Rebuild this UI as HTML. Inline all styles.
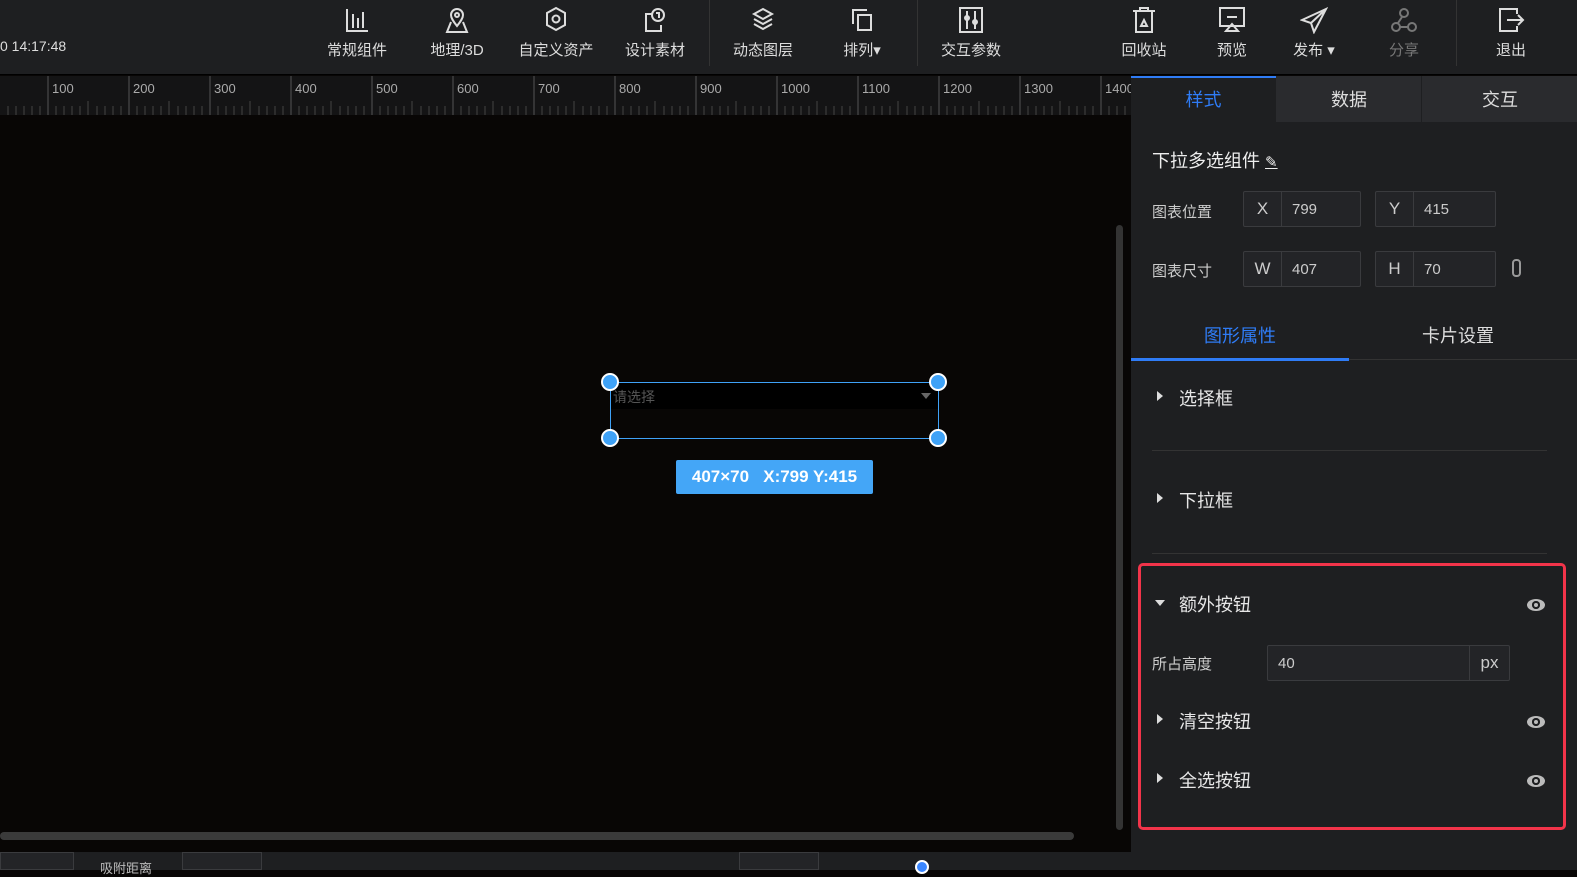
<!DOCTYPE html>
<html><head><meta charset="utf-8"><style>
*{box-sizing:border-box;margin:0;padding:0}
body{width:1577px;height:870px;overflow:hidden;background:#080605;font-family:"Liberation Sans","Noto Sans CJK SC",sans-serif;color:#ddd;position:relative}
.abs{position:absolute}
.top{left:0;top:0;width:1577px;height:75px;background:#1e1f21;border-bottom:1px solid #000}
.tb{position:absolute;top:0;height:75px;text-align:center;font-size:15px;color:#ddd}
.tb svg{display:block;margin:6px auto 0}
.tb span{display:block;margin-top:5px}
.sep{position:absolute;top:0;width:1px;height:66px;background:#333}
.ruler{left:0;top:76px;width:1131px;height:39px;background:#141415;overflow:hidden}
.panel{left:1131px;top:76px;width:446px;height:794px;background:#1e1f21}
.inp{position:absolute;height:36px;border:1px solid #3a3b3e;background:#232427;border-radius:2px;font-size:15px;color:#ccc}
.inp b{font-weight:normal;position:absolute;left:0;top:0;width:38px;height:34px;border-right:1px solid #3a3b3e;text-align:center;line-height:34px;font-size:17px}
.inp i{font-style:normal;position:absolute;left:48px;top:9px}
.lbl{position:absolute;font-size:15px;color:#ccc}
.sec{position:absolute;left:1179px;font-size:18px;color:#e6e6e6}
.tri{position:absolute;width:0;height:0;border-top:5px solid transparent;border-bottom:5px solid transparent;border-left:6px solid #ddd}
.eye{position:absolute;left:1527px;width:18px;height:12px;border-radius:50%;background:#bbb}
.eye:after{content:"";position:absolute;left:5px;top:2px;width:8px;height:8px;border-radius:50%;background:#1e1f21;box-shadow:inset 0 0 0 2px #1e1f21}
.eye:before{content:"";position:absolute;left:7px;top:4px;width:4px;height:4px;border-radius:50%;background:#bbb;z-index:2}
.h{position:absolute;width:18px;height:18px;border-radius:50%;background:#3fa2f7;border:2px solid #fff}
</style></head><body>
<div class="abs top"></div>
<div class="abs" style="left:0;top:38px;font-size:14px;color:#ddd">0 14:17:48</div>
<div class="tb" style="left:318px;width:78px"><svg width="26" height="28" viewBox="0 0 26 28" fill="none" stroke="#ddd" stroke-width="2"><path d="M3 3v22h21M9 8v14M14 12v10M19 6v16"/></svg><span>常规组件</span></div>
<div class="tb" style="left:418px;width:78px"><svg width="26" height="28" viewBox="0 0 26 28" fill="none" stroke="#ddd" stroke-width="2"><path d="M13 20c-4-5-6-8-6-11a6 6 0 0112 0c0 3-2 6-6 11zM7 16l-4 10h20l-4-10"/><circle cx="13" cy="9" r="2"/></svg><span>地理/3D</span></div>
<div class="tb" style="left:510px;width:92px"><svg width="26" height="28" viewBox="0 0 26 28" fill="none" stroke="#ddd" stroke-width="2"><path d="M13 2l9 5v12l-9 5-9-5V7z"/><circle cx="13" cy="13" r="3.5"/></svg><span>自定义资产</span></div>
<div class="tb" style="left:618px;width:74px"><svg width="26" height="28" viewBox="0 0 26 28" fill="none" stroke="#ddd" stroke-width="2"><path d="M10 8H4v17h15v-6"/><circle cx="16" cy="9" r="6"/><path d="M14 7h3v5"/></svg><span>设计素材</span></div>
<div class="sep" style="left:709px"></div>
<div class="tb" style="left:726px;width:74px"><svg width="26" height="28" viewBox="0 0 26 28" fill="none" stroke="#ddd" stroke-width="2"><path d="M13 3l9 5-9 5-9-5zM4 13l9 5 9-5M4 18l9 5 9-5"/></svg><span>动态图层</span></div>
<div class="tb" style="left:830px;width:64px"><svg width="26" height="28" viewBox="0 0 26 28" fill="none" stroke="#ddd" stroke-width="2"><path d="M4 18V4h14"/><rect x="9" y="9" width="13" height="15"/></svg><span>排列▾</span></div>
<div class="sep" style="left:917px"></div>
<div class="tb" style="left:934px;width:74px"><svg width="26" height="28" viewBox="0 0 26 28" fill="none" stroke="#ddd" stroke-width="2"><rect x="2" y="2" width="22" height="24"/><path d="M9 5v18M17 5v18"/><circle cx="9" cy="12" r="2"/><circle cx="17" cy="16" r="2"/></svg><span>交互参数</span></div>
<div class="tb" style="left:1114px;width:60px"><svg width="26" height="28" viewBox="0 0 26 28" fill="none" stroke="#ddd" stroke-width="2"><path d="M2 5h22M9 5V2h8v3M5 5v21h16V5M10 20h6l-3-6z"/></svg><span>回收站</span></div>
<div class="tb" style="left:1202px;width:60px"><svg width="28" height="28" viewBox="0 0 28 28" fill="none" stroke="#ddd" stroke-width="2"><path d="M2 2h24v18H2zM9 11h10M14 18l-6 7h12z"/></svg><span>预览</span></div>
<div class="tb" style="left:1282px;width:64px"><svg width="28" height="28" viewBox="0 0 28 28" fill="none" stroke="#ddd" stroke-width="2"><path d="M26 3L2 14l9 3 3 9zM11 17l15-14"/></svg><span>发布 ▾</span></div>
<div class="tb" style="left:1374px;width:60px;color:#777"><svg width="28" height="28" viewBox="0 0 28 28" fill="none" stroke="#777" stroke-width="2"><circle cx="14" cy="7" r="4"/><circle cx="6" cy="21" r="4"/><circle cx="22" cy="21" r="4"/><path d="M10 21h8M12 11l-4 6"/></svg><span>分享</span></div>
<div class="sep" style="left:1456px"></div>
<div class="tb" style="left:1481px;width:60px"><svg width="28" height="28" viewBox="0 0 28 28" fill="none" stroke="#ddd" stroke-width="2"><path d="M20 8V3H3v22h17v-5M10 14h16M21 9l5 5-5 5"/></svg><span>退出</span></div>

<div class="abs ruler">
<svg width="1131" height="39">
<g stroke="#555" stroke-width="1">
<path d="M48 0v39M129 0v39M210 0v39M291 0v39M372 0v39M453 0v39M534 0v39M615 0v39M696 0v39M777 0v39M858 0v39M939 0v39M1020 0v39M1101 0v39"/>
</g>
<g stroke="#444"><path d="M8 30v9M16 30v9M24 30v9M32 30v9M40 30v9M56 30v9M64 30v9M72 30v9M80 30v9M88 25v14M97 30v9M105 30v9M113 30v9M121 30v9M137 30v9M145 30v9M153 30v9M161 30v9M169 25v14M178 30v9M186 30v9M194 30v9M202 30v9M218 30v9M226 30v9M234 30v9M242 30v9M250 25v14M259 30v9M267 30v9M275 30v9M283 30v9M299 30v9M307 30v9M315 30v9M323 30v9M331 25v14M340 30v9M348 30v9M356 30v9M364 30v9M380 30v9M388 30v9M396 30v9M404 30v9M412 25v14M421 30v9M429 30v9M437 30v9M445 30v9M461 30v9M469 30v9M477 30v9M485 30v9M493 25v14M502 30v9M510 30v9M518 30v9M526 30v9M542 30v9M550 30v9M558 30v9M566 30v9M574 25v14M583 30v9M591 30v9M599 30v9M607 30v9M623 30v9M631 30v9M639 30v9M647 30v9M655 25v14M664 30v9M672 30v9M680 30v9M688 30v9M704 30v9M712 30v9M720 30v9M728 30v9M736 25v14M745 30v9M753 30v9M761 30v9M769 30v9M785 30v9M793 30v9M801 30v9M809 30v9M817 25v14M826 30v9M834 30v9M842 30v9M850 30v9M866 30v9M874 30v9M882 30v9M890 30v9M898 25v14M907 30v9M915 30v9M923 30v9M931 30v9M947 30v9M955 30v9M963 30v9M971 30v9M979 25v14M988 30v9M996 30v9M1004 30v9M1012 30v9M1028 30v9M1036 30v9M1044 30v9M1052 30v9M1060 25v14M1069 30v9M1077 30v9M1085 30v9M1093 30v9M1109 30v9M1117 30v9M1125 30v9"/></g>
<g fill="#aaa" font-size="13" font-family="Liberation Sans"><text x="52" y="17">100</text><text x="133" y="17">200</text><text x="214" y="17">300</text><text x="295" y="17">400</text><text x="376" y="17">500</text><text x="457" y="17">600</text><text x="538" y="17">700</text><text x="619" y="17">800</text><text x="700" y="17">900</text><text x="781" y="17">1000</text><text x="862" y="17">1100</text><text x="943" y="17">1200</text><text x="1024" y="17">1300</text><text x="1105" y="17">1400</text></g>
</svg></div>

<div class="abs" style="left:1116px;top:225px;width:7px;height:605px;background:#333;border-radius:4px"></div>
<div class="abs" style="left:0;top:832px;width:1074px;height:8px;background:#3a3a3a;border-radius:4px"></div>
<div class="abs" style="left:0;top:852px;width:1131px;height:18px;background:#1e1f21"></div>
<div class="abs" style="left:0;top:852px;width:74px;height:18px;border:1px solid #3a3b3e;background:#232427"></div>
<div class="abs" style="left:100px;top:858px;font-size:13px;color:#bbb">吸附距离</div>
<div class="abs" style="left:182px;top:852px;width:80px;height:18px;border:1px solid #3a3b3e;background:#232427"></div>
<div class="abs" style="left:739px;top:852px;width:80px;height:18px;border:1px solid #3a3b3e;background:#232427"></div>
<div class="abs" style="left:915px;top:860px;width:14px;height:14px;border-radius:50%;background:#3a86ff;border:2px solid #fff"></div>

<!-- widget -->
<div class="abs" style="left:611px;top:383px;width:327px;height:26px;background:#000"></div>
<div class="abs" style="left:613px;top:387px;font-size:14px;color:#555">请选择</div>
<div class="abs" style="left:921px;top:393px;border-left:5px solid transparent;border-right:5px solid transparent;border-top:6px solid #666"></div>
<div class="abs" style="left:610px;top:382px;width:329px;height:57px;border:1px solid #3fa2f7"></div>
<div class="h" style="left:601px;top:373px"></div><div class="h" style="left:929px;top:373px"></div>
<div class="h" style="left:601px;top:429px"></div><div class="h" style="left:929px;top:429px"></div>
<div class="abs" style="left:676px;top:460px;width:197px;height:34px;background:#44a6f7;border-radius:2px;color:#fff;font-weight:bold;font-size:17px;line-height:34px;text-align:center;white-space:pre">407×70   X:799 Y:415</div>

<!-- panel -->
<div class="abs panel"></div>
<div class="abs" style="left:1131px;top:76px;width:446px;height:46px;background:#2a2b2e"></div>
<div class="abs" style="left:1131px;top:76px;width:145px;height:46px;background:#1e1f21;border-top:2px solid #2f7cf6;color:#2f7cf6;font-size:18px;text-align:center;line-height:44px">样式</div>
<div class="abs" style="left:1277px;top:76px;width:145px;height:46px;color:#ddd;font-size:18px;text-align:center;line-height:48px;border-right:1px solid #1e1f21">数据</div>
<div class="abs" style="left:1423px;top:76px;width:154px;height:46px;color:#ddd;font-size:18px;text-align:center;line-height:48px">交互</div>
<div class="abs" style="left:1152px;top:147px;font-size:18px;color:#eee">下拉多选组件 <span style="font-size:15px;text-decoration:underline">✎</span></div>
<div class="lbl" style="left:1152px;top:201px">图表位置</div>
<div class="inp" style="left:1243px;top:191px;width:118px"><b>X</b><i>799</i></div>
<div class="inp" style="left:1375px;top:191px;width:121px"><b>Y</b><i>415</i></div>
<div class="lbl" style="left:1152px;top:260px">图表尺寸</div>
<div class="inp" style="left:1243px;top:251px;width:118px"><b>W</b><i>407</i></div>
<div class="inp" style="left:1375px;top:251px;width:121px"><b>H</b><i>70</i></div>
<div class="abs" style="left:1512px;top:259px;width:9px;height:18px;border:2px solid #999;border-radius:4px"></div>
<div class="abs" style="left:1131px;top:322px;width:218px;text-align:center;font-size:18px;color:#2f7cf6">图形属性</div>
<div class="abs" style="left:1349px;top:322px;width:218px;text-align:center;font-size:18px;color:#ddd">卡片设置</div>
<div class="abs" style="left:1131px;top:359px;width:446px;height:1px;background:#333"></div>
<div class="abs" style="left:1131px;top:358px;width:218px;height:3px;background:#2f7cf6"></div>
<div class="tri" style="left:1157px;top:391px"></div><div class="sec" style="top:385px">选择框</div>
<div class="abs" style="left:1152px;top:450px;width:395px;height:1px;background:#333"></div>
<div class="tri" style="left:1157px;top:493px"></div><div class="sec" style="top:487px">下拉框</div>
<div class="abs" style="left:1152px;top:553px;width:395px;height:1px;background:#333"></div>
<div class="abs" style="left:1138px;top:563px;width:428px;height:267px;border:3px solid #f2344a;border-radius:5px"></div>
<div class="abs" style="left:1155px;top:600px;border-left:5px solid transparent;border-right:5px solid transparent;border-top:6px solid #ddd"></div>
<div class="sec" style="top:591px">额外按钮</div><div class="eye" style="top:599px"></div>
<div class="lbl" style="left:1152px;top:653px">所占高度</div>
<div class="inp" style="left:1267px;top:645px;width:243px"><i style="left:10px">40</i><span style="position:absolute;right:0;top:0;width:40px;height:34px;border-left:1px solid #3a3b3e;text-align:center;line-height:34px;font-size:17px">px</span></div>
<div class="tri" style="left:1157px;top:714px"></div><div class="sec" style="top:708px">清空按钮</div><div class="eye" style="top:716px"></div>
<div class="tri" style="left:1157px;top:773px"></div><div class="sec" style="top:767px">全选按钮</div><div class="eye" style="top:775px"></div>
</body></html>
